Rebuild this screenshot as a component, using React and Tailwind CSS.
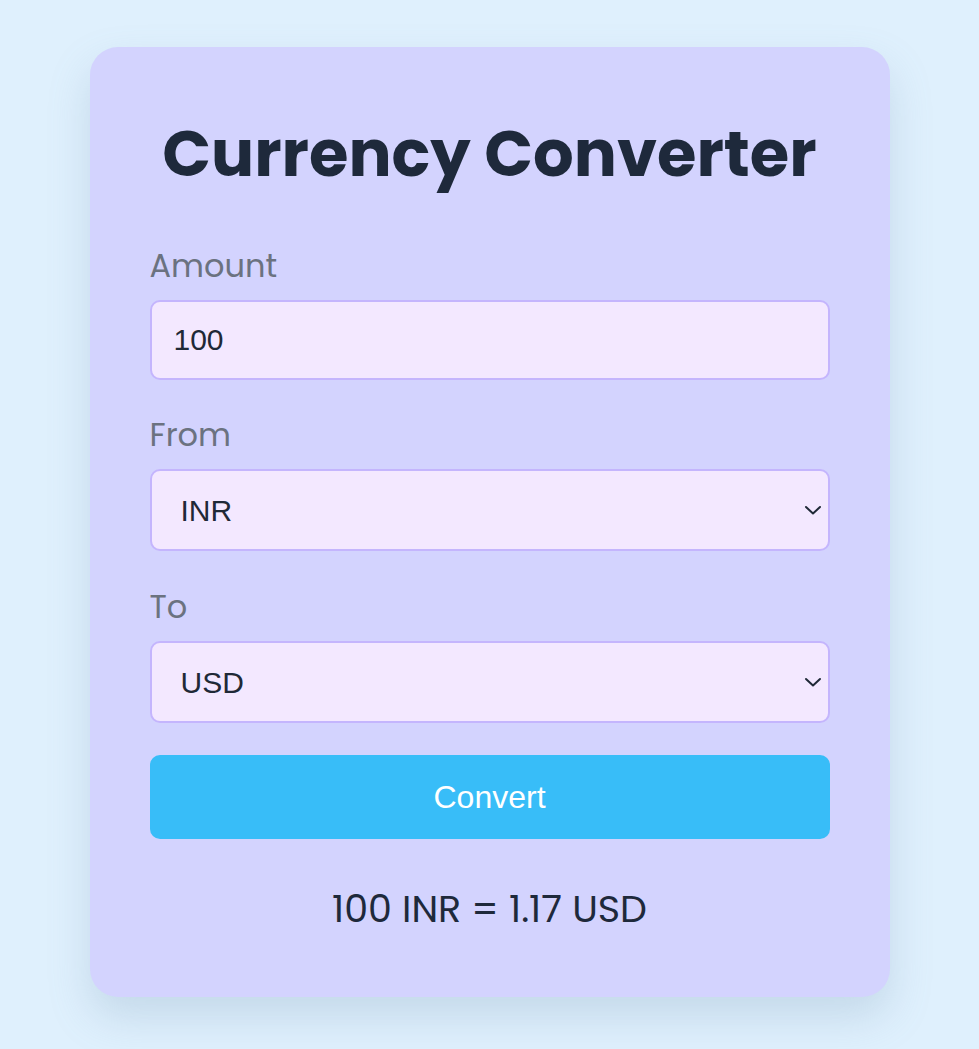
import { useState } from "react";

const rates = { INR: 1, USD: 0.0117, EUR: 0.0108, GBP: 0.0093, JPY: 1.75 };

const Chevron = () => (
  <svg
    className="pointer-events-none absolute right-[8px] top-1/2 -translate-y-1/2"
    width="18"
    height="10"
    viewBox="0 0 18 10"
    fill="none"
  >
    <path d="M2 2l7 6.5L16 2" stroke="#1f2937" strokeWidth="2" strokeLinecap="round" strokeLinejoin="round" />
  </svg>
);

const Field = ({ label, className = "", children }) => (
  <div className={`flex flex-col ${className}`}>
    <label className="font-['Poppins','Lato',sans-serif] text-[32px] leading-[40px] text-[#6b7280] mb-[14px]">
      {label}
    </label>
    {children}
  </div>
);

const CurrencySelect = ({ value, onChange }) => (
  <div className="relative">
    <select
      value={value}
      onChange={(e) => onChange(e.target.value)}
      className="w-full h-[82px] appearance-none rounded-[10px] border-2 border-[#c4b5fd] bg-[#f3e8ff] pl-[29px] pr-10 font-['Liberation_Sans',Arial,sans-serif] text-[30px] text-[#1f2937] outline-none"
    >
      {Object.keys(rates).map((c) => (
        <option key={c} value={c}>
          {c}
        </option>
      ))}
    </select>
    <Chevron />
  </div>
);

const App = () => {
  const [amount, setAmount] = useState("100");
  const [from, setFrom] = useState("INR");
  const [to, setTo] = useState("USD");
  const [result, setResult] = useState("100 INR = 1.17 USD");

  const convert = () => {
    const value = ((parseFloat(amount) || 0) / rates[from]) * rates[to];
    setResult(`${amount} ${from} = ${value.toFixed(2)} ${to}`);
  };

  return (
    <div className="min-h-[1049px] bg-[#dff0fd] pt-[47px]">
      <div className="mx-auto w-[800px] h-[950px] rounded-[28px] bg-[#d3d3fe] px-[60px] pt-[97px] shadow-[0_20px_40px_rgba(120,150,180,0.25)]">
        <h1 className="text-center font-['Poppins','Inter',sans-serif] text-[64px] font-bold leading-[20px] text-[#1e293b]">
          Currency Converter
        </h1>

        <div className="mt-[82px] flex flex-col">
          <Field label="Amount">
            <input
              type="text"
              value={amount}
              onChange={(e) => setAmount(e.target.value)}
              className="h-[80px] rounded-[10px] border-2 border-[#c4b5fd] bg-[#f3e8ff] px-[22px] font-['Liberation_Sans',Arial,sans-serif] text-[30px] text-[#1f2937] outline-none"
            />
          </Field>
          <Field label="From" className="mt-[35px]">
            <CurrencySelect value={from} onChange={setFrom} />
          </Field>
          <Field label="To" className="mt-[36px]">
            <CurrencySelect value={to} onChange={setTo} />
          </Field>
        </div>

        <button
          onClick={convert}
          className="mt-[32px] h-[84px] w-full rounded-[10px] bg-[#38bdf8] font-['Liberation_Sans',Arial,sans-serif] text-[32px] text-white"
        >
          Convert
        </button>

        <p className="mt-[41px] text-center font-['Poppins','Lato',sans-serif] text-[38px] text-[#1e293b]">
          {result}
        </p>
      </div>
    </div>
  );
};

export default App;
